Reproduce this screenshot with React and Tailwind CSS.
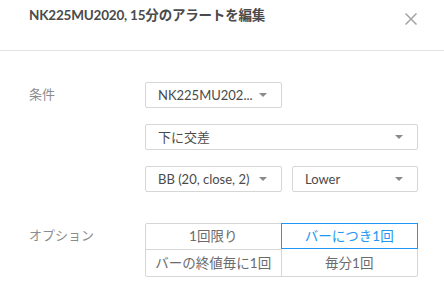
import React from "react";

const font = { fontFamily: 'Lato, "Noto Sans CJK JP", sans-serif' };

function Arrow() {
  return (
    <svg width="8" height="4" viewBox="0 0 8 4" className="shrink-0">
      <path d="M0 0 L8 0 L4 4 Z" fill="#8a8a8a" />
    </svg>
  );
}

function Select({ text, className }) {
  return (
    <div
      className={`h-[26px] border border-[#d6d6d6] rounded-[2px] flex items-center justify-between pl-[12px] pr-[14px] text-[13px] text-[#4a4a4a] ${className}`}
    >
      <span className="whitespace-nowrap leading-none">{text}</span>
      <Arrow />
    </div>
  );
}

export default function App() {
  return (
    <div className="w-[444px] h-[283px] bg-white overflow-hidden" style={font}>
      <div className="h-[51px] border-b border-[#e3e3e3] flex items-start justify-between pl-[29px] pr-[27px] pt-[5px]">
        <div className="text-[13.5px] font-bold text-[#4a4a4a] leading-[20px] tracking-[-0.2px]">
          NK225MU2020, 15分のアラートを編集
        </div>
        <svg width="12" height="12" viewBox="0 0 12 12" className="mt-[8px]">
          <path d="M0.5 0.5 L11.5 11.5 M11.5 0.5 L0.5 11.5" stroke="#a3a3a3" strokeWidth="1.5" />
        </svg>
      </div>
      <div className="flex flex-col pl-[29px] pt-[31px]">
        <div className="flex items-center">
          <div className="w-[116px] text-[13px] text-[#8c8c8c]">条件</div>
          <Select text="NK225MU202..." className="w-[137px]" />
        </div>
        <div className="flex items-center mt-[16px]">
          <div className="w-[116px]" />
          <Select text="下に交差" className="w-[273px]" />
        </div>
        <div className="flex items-center mt-[16px]">
          <div className="w-[116px]" />
          <div className="flex gap-[10px]">
            <Select text="BB (20, close, 2)" className="w-[137px]" />
            <Select text="Lower" className="w-[126px]" />
          </div>
        </div>
        <div className="flex items-start mt-[31px]">
          <div className="w-[116px] h-[26px] flex items-center text-[13px] text-[#8c8c8c]">オプション</div>
          <div className="w-[273px] grid grid-cols-2 border border-[#d6d6d6] rounded-[2px] text-[13.5px] text-[#6b6b6b]">
            <div className="h-[26px] flex items-center justify-center border-r border-b border-[#d6d6d6]">1回限り</div>
            <div className="h-[26px] flex items-center justify-center border border-[#2196f3] text-[#2196f3] -m-[1px] relative">バーにつき1回</div>
            <div className="h-[26px] flex items-center justify-center border-r border-[#d6d6d6]">バーの終値毎に1回</div>
            <div className="h-[26px] flex items-center justify-center">毎分1回</div>
          </div>
        </div>
      </div>
    </div>
  );
}
